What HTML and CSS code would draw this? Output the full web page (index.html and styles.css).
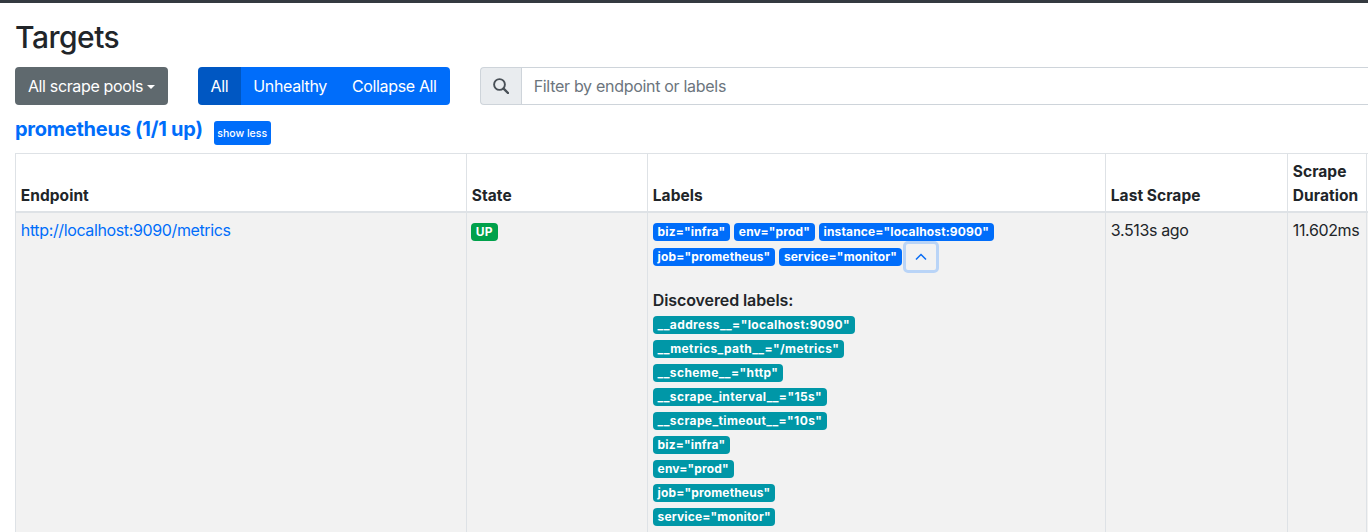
FILE: index.html
```html
<!DOCTYPE html>
<html lang="en">
<head>
    <meta charset="UTF-8">
    <meta name="viewport" content="width=device-width, initial-scale=1.0">
    <title>Targets</title>
    <link rel="stylesheet" href="styles.css">
</head>
<body>
    <div class="topbar"></div>
    <div class="container">
        <h1>Targets</h1>

        <div class="toolbar">
            <button class="btn btn-secondary">All scrape pools<span class="caret"></span></button>
            <div class="btn-group">
                <button class="btn btn-primary active">All</button>
                <button class="btn btn-primary">Unhealthy</button>
                <button class="btn btn-primary">Collapse All</button>
            </div>
            <div class="search">
                <span class="search-icon">
                    <svg width="16" height="16" viewBox="0 0 16 16"><circle cx="6.500" cy="6.500" r="5.400" fill="none" stroke="#495057" stroke-width="1.900"/><path d="M10.600 10.600L15 15" fill="none" stroke="#495057" stroke-width="2.400" stroke-linecap="round"/></svg>
                </span>
                <input class="search-input" type="text" placeholder="Filter by endpoint or labels">
            </div>
        </div>

        <div class="pool-head">
            <a class="pool-link" href="#">prometheus (1/1 up)</a>
            <button class="show-less">show less</button>
        </div>

        <table class="targets">
            <thead>
                <tr>
                    <th class="col-endpoint">Endpoint</th>
                    <th class="col-state">State</th>
                    <th class="col-labels">Labels</th>
                    <th class="col-last">Last Scrape</th>
                    <th class="col-duration">Scrape Duration</th>
                    <th class="col-error"></th>
                </tr>
            </thead>
            <tbody>
                <tr>
                    <td><a href="#">http://localhost:9090/metrics</a></td>
                    <td><span class="badge badge-up">UP</span></td>
                    <td>
                        <div class="label-row">
                            <span class="badge badge-blue">biz="infra"</span>
                            <span class="badge badge-blue">env="prod"</span>
                            <span class="badge badge-blue">instance="localhost:9090"</span>
                        </div>
                        <div class="label-row">
                            <span class="badge badge-blue">job="prometheus"</span>
                            <span class="badge badge-blue">service="monitor"</span>
                            <button class="toggle">
                                <svg width="12" height="8" viewBox="0 0 12 8"><path d="M1 6.500L6 1.500L11 6.500" fill="none" stroke="#0a6ef5" stroke-width="1.500"/></svg>
                            </button>
                        </div>
                        <div class="discovered">
                            <div class="discovered-title">Discovered labels:</div>
                            <div class="disc-row"><span class="badge badge-teal dunder">__address__="localhost:9090"</span></div>
                            <div class="disc-row"><span class="badge badge-teal dunder">__metrics_path__="/metrics"</span></div>
                            <div class="disc-row"><span class="badge badge-teal dunder">__scheme__="http"</span></div>
                            <div class="disc-row"><span class="badge badge-teal dunder">__scrape_interval__="15s"</span></div>
                            <div class="disc-row"><span class="badge badge-teal dunder">__scrape_timeout__="10s"</span></div>
                            <div class="disc-row"><span class="badge badge-teal">biz="infra"</span></div>
                            <div class="disc-row"><span class="badge badge-teal">env="prod"</span></div>
                            <div class="disc-row"><span class="badge badge-teal">job="prometheus"</span></div>
                            <div class="disc-row"><span class="badge badge-teal">service="monitor"</span></div>
                        </div>
                    </td>
                    <td>3.513s ago</td>
                    <td>11.602ms</td>
                    <td></td>
                </tr>
            </tbody>
        </table>
    </div>
</body>
</html>
```

FILE: styles.css
```css
html, body {
    height: 532px;
    overflow: hidden;
}

body {
    margin: 0;
    background-color: #fff;
    color: #212529;
    font-family: Inter, 'Noto Sans', sans-serif;
    font-size: 16px;
    line-height: 24px;
}

.topbar {
    height: 3px;
    background-color: #343a40;
}

.container {
    padding-left: 15px;
    width: 1500px;
}

h1 {
    margin: 0;
    padding-top: 14px;
    height: 50px;
    box-sizing: border-box;
    font-size: 30px;
    line-height: 40px;
    font-weight: 500;
    letter-spacing: -0.5px;
}

.toolbar {
    display: flex;
    margin-top: 14px;
    height: 38px;
}

.btn {
    height: 38px;
    border: none;
    padding: 0 12.500px;
    color: #fff;
    font-family: inherit;
    font-size: 16px;
    letter-spacing: -0.35px;
    cursor: pointer;
}

.btn-secondary {
    background-color: #5f696e;
    border-radius: 4px;
    width: 153px;
    padding: 0;
}

.caret {
    display: inline-block;
    margin-left: 4px;
    vertical-align: 3px;
    border-top: 4.800px solid #fff;
    border-left: 4.800px solid transparent;
    border-right: 4.800px solid transparent;
}

.btn-group {
    display: flex;
    margin-left: 30px;
    border-radius: 4px;
    overflow: hidden;
}

.btn-primary {
    background-color: #006dfa;
}

.btn-primary.active {
    background-color: #0057c2;
}

.btn-group .btn:last-child {
    padding-right: 13px;
}

.search {
    display: flex;
    margin-left: 30px;
    flex: 1;
}

.search-icon {
    display: flex;
    align-items: center;
    justify-content: center;
    width: 41px;
    box-sizing: border-box;
    background-color: #e9ecef;
    border: 1px solid #ced4da;
    border-right: none;
    border-radius: 4px 0 0 4px;
}

.search-input {
    flex: 1;
    border: 1px solid #ced4da;
    padding: 0 12px;
    font-family: inherit;
    font-size: 16px;
    letter-spacing: -0.3px;
    outline: none;
}

.search-input::placeholder {
    color: #6c757d;
}

.pool-head {
    display: flex;
    align-items: center;
    height: 48px;
}

.pool-link {
    color: #006dfa;
    font-size: 20px;
    line-height: 24px;
    font-weight: 700;
    letter-spacing: -0.25px;
    text-decoration: none;
}

.show-less {
    margin-left: 11px;
    margin-top: 8px;
    width: 57px;
    height: 24px;
    padding: 0;
    border: none;
    border-radius: 3px;
    background-color: #006dfa;
    color: #fff;
    font-family: inherit;
    font-size: 10.500px;
    font-weight: 500;
}

.targets {
    table-layout: fixed;
    border-collapse: collapse;
    width: 1481px;
}

.col-endpoint { width: 451px; }
.col-state { width: 181px; }
.col-labels { width: 458px; }
.col-last { width: 182px; }
.col-duration { width: 79px; }

th, td {
    box-sizing: border-box;
    border: 1px solid #dee2e6;
    padding: 5px 4.800px;
    text-align: left;
    vertical-align: top;
}

th {
    vertical-align: bottom;
    border-bottom: 2px solid #dee2e6;
    font-size: 15.500px;
    font-weight: 700;
    letter-spacing: 0.05px;
    padding-bottom: 3px;
    height: 58px;
}

tbody tr {
    background-color: #f2f2f2;
}

td {
    height: 340px;
    letter-spacing: -0.37px;
}

td a {
    color: #006dfa;
    text-decoration: none;
}

.badge {
    display: inline-block;
    height: 18px;
    padding: 0 4.800px;
    border-radius: 4px;
    color: #fff;
    font-size: 12px;
    line-height: 18px;
    font-weight: 700;
    letter-spacing: 0.15px;
    white-space: nowrap;
}

.badge-up { background-color: #00a14b; margin: 5px 0 0 -1px; padding: 0 5px; vertical-align: top; }
.badge-blue { background-color: #006dfa; }
.badge-teal { background-color: #0097a7; }
.dunder { letter-spacing: 0.4px; }

.label-row {
    display: flex;
    align-items: center;
    gap: 4px;
    height: 24px;
    margin-bottom: 1px;
}

.label-row:first-child {
    margin-top: 2px;
}

.toggle {
    width: 36px;
    height: 32px;
    flex: none;
    margin-left: -3px;
    padding: 0;
    background: transparent;
    border: 3px solid #b9d4f7;
    border-radius: 5px;
}

.discovered {
    margin-top: 19px;
}

.discovered-title {
    font-weight: 600;
    font-size: 16px;
    letter-spacing: -0.1px;
    height: 28px;
    line-height: 24px;
}

.disc-row {
    height: 24px;
}

.disc-row .badge {
    vertical-align: top;
}
```
